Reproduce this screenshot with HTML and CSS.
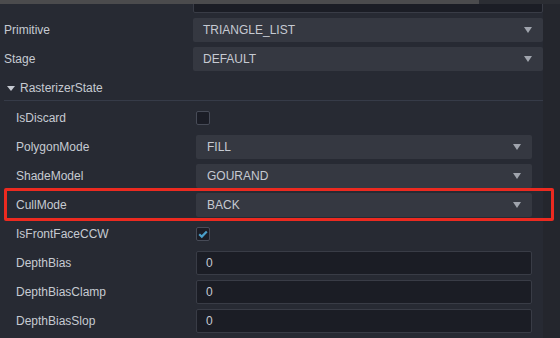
FILE: index.html
```html
<!DOCTYPE html>
<html lang="en">
<head>
    <meta charset="UTF-8">
    <title>Pipeline State</title>
    <link rel="stylesheet" href="styles.css">
</head>
<body>
<div class="topbar">
    <div class="topbar-thumb"></div>
</div>
<div class="main">
    <div class="panel">
        <div class="rows">
            <div class="row">
                <span class="label"></span>
                <div class="field"></div>
            </div>
            <div class="row">
                <span class="label">Primitive</span>
                <div class="select"><span>TRIANGLE_LIST</span><i class="arrow"></i></div>
            </div>
            <div class="row">
                <span class="label">Stage</span>
                <div class="select"><span>DEFAULT</span><i class="arrow"></i></div>
            </div>
            <div class="group-head"><i class="caret"></i>RasterizerState</div>
            <div class="group">
                <div class="row">
                    <span class="label">IsDiscard</span>
                    <span class="check"></span>
                </div>
                <div class="row">
                    <span class="label">PolygonMode</span>
                    <div class="select"><span>FILL</span><i class="arrow"></i></div>
                </div>
                <div class="row">
                    <span class="label">ShadeModel</span>
                    <div class="select"><span>GOURAND</span><i class="arrow"></i></div>
                </div>
                <div class="row row-marked">
                    <span class="label">CullMode</span>
                    <div class="select"><span>BACK</span><i class="arrow"></i></div>
                </div>
                <div class="row">
                    <span class="label">IsFrontFaceCCW</span>
                    <span class="check">
                        <svg width="12" height="12" viewBox="0 0 12 12"><polyline points="2.2,6.2 4.8,8.6 9.8,3.4" fill="none" stroke="#4a9fca" stroke-width="2.2"/></svg>
                    </span>
                </div>
                <div class="row">
                    <span class="label">DepthBias</span>
                    <div class="field">0</div>
                </div>
                <div class="row">
                    <span class="label">DepthBiasClamp</span>
                    <div class="field">0</div>
                </div>
                <div class="row">
                    <span class="label">DepthBiasSlop</span>
                    <div class="field">0</div>
                </div>
            </div>
        </div>
    </div>
    <div class="scroll"></div>
</div>
</body>
</html>
```

FILE: styles.css
```css
* {
    margin: 0;
    padding: 0;
    box-sizing: border-box;
}

html, body {
    height: 100%;
}

body {
    background-color: #272a33;
    font-family: "Liberation Sans", Arial, sans-serif;
    font-size: 12px;
    color: #c6cad2;
    overflow: hidden;
}

/* strip at the very top sits over the scrolled rows */
.topbar {
    position: relative;
    z-index: 2;
    height: 4px;
    background-color: #2b2d33;
    display: flex;
}
.topbar-thumb {
    width: 479px;
    background-color: #4b4b4d;
}

.main {
    display: flex;
    height: 334px;
}

.panel {
    width: 543px;
    flex-shrink: 0;
    position: relative;
    z-index: 1;
}

.scroll {
    flex: 1;
    background-color: #24262d;
}

.rows {
    display: flex;
    flex-direction: column;
    gap: 5px;
    margin-top: -15px;
    padding-left: 4px;
}

.row {
    display: flex;
    align-items: center;
    height: 24px;
}
.label {
    width: 189px;
    flex-shrink: 0;
    line-height: 24px;
}

.select {
    flex: 1;
    height: 24px;
    display: flex;
    align-items: center;
    justify-content: space-between;
    padding: 0 11px 0 10px;
    background-color: #353841;
    border-radius: 2px;
}
.arrow {
    width: 0;
    height: 0;
    border-left: 4px solid transparent;
    border-right: 4px solid transparent;
    border-top: 6px solid #a0a4ad;
}

.field {
    flex: 1;
    height: 24px;
    line-height: 22px;
    padding-left: 9px;
    background-color: #1b1d25;
    border: 1px solid #393c46;
    border-radius: 2px;
}

.group-head {
    height: 25px;
    display: flex;
    align-items: center;
    border-bottom: 1px solid #363b48;
    padding-left: 3px;
}
.caret {
    width: 0;
    height: 0;
    border-left: 4px solid transparent;
    border-right: 4px solid transparent;
    border-top: 5px solid #c6cad2;
    margin-right: 5px;
}

.group {
    display: flex;
    flex-direction: column;
    gap: 5px;
    padding: 0 11px 0 12px;
}
.group .label {
    width: 180px;
}
.group .select {
    padding-left: 11px;
}

.check {
    width: 14px;
    height: 14px;
    display: flex;
    align-items: center;
    justify-content: center;
    background-color: #1b1d26;
    border: 1px solid #474b57;
    border-radius: 2px;
}

.row-marked {
    position: relative;
}
.row-marked::after {
    content: "";
    position: absolute;
    top: -5px;
    bottom: -4px;
    left: -12px;
    right: -22px;
    border: 3px solid #ec2a20;
    border-radius: 2px;
}
```
